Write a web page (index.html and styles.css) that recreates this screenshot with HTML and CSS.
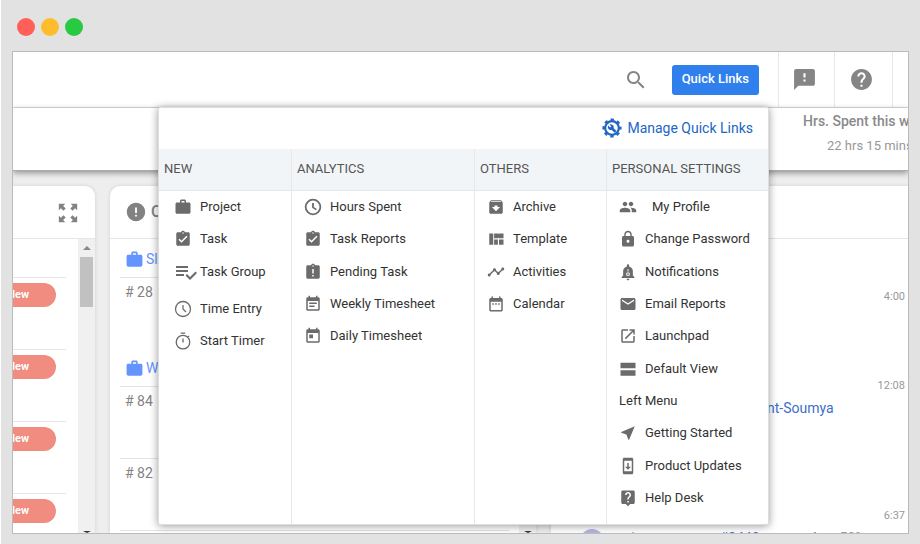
FILE: index.html
```html
<!DOCTYPE html>
<html lang="en">
<head>
<meta charset="utf-8">
<title>Quick Links</title>
<link rel="stylesheet" href="styles.css">
</head>
<body>
<svg class="sprite" aria-hidden="true">
  <symbol id="work" viewBox="0 0 24 24"><path d="M20 6h-4V4c0-1.110-.89-2-2-2h-4c-1.110 0-2 .89-2 2v2H4c-1.110 0-2 .89-2 2v11c0 1.110.89 2 2 2h16c1.110 0 2-.89 2-2V8c0-1.110-.89-2-2-2zm-6 0h-4V4h4v2z"/></symbol>
  <symbol id="task" viewBox="0 0 24 24"><path d="M19 3h-4.180C14.400 1.840 13.300 1 12 1c-1.300 0-2.400.84-2.820 2H5c-1.100 0-2 .9-2 2v14c0 1.100.9 2 2 2h14c1.100 0 2-.9 2-2V5c0-1.100-.9-2-2-2zm-7 0c.55 0 1 .45 1 1s-.45 1-1 1-1-.45-1-1 .45-1 1-1zm-2 14l-4-4 1.410-1.410L10 14.170l6.590-6.590L18 9l-8 8z"/></symbol>
  <symbol id="late" viewBox="0 0 24 24"><path d="M19 3h-4.180C14.400 1.840 13.300 1 12 1c-1.300 0-2.400.84-2.820 2H5c-1.100 0-2 .9-2 2v14c0 1.100.9 2 2 2h14c1.100 0 2-.9 2-2V5c0-1.100-.9-2-2-2zm-6 15h-2v-2h2v2zm0-4h-2V8h2v6zm-1-9c-.55 0-1-.45-1-1s.45-1 1-1 1 .45 1 1-.45 1-1 1z"/></symbol>
  <symbol id="group" viewBox="0 0 24 24"><path d="M14 10H2v2h12v-2zm0-4H2v2h12V6zM2 16h8v-2H2v2zm19.500-4.500L23 13l-6.990 7-4.510-4.500L13 14l3.010 3 5.490-5.500z"/></symbol>
  <symbol id="clock-thin" viewBox="0 0 24 24"><path fill="none" stroke="currentColor" stroke-width="1.700" d="M12 2a10 10 0 1 0 0 20 10 10 0 0 0 0-20zM12 6.500V12l4 4"/></symbol>
  <symbol id="timer" viewBox="0 0 24 24"><path fill="none" stroke="currentColor" stroke-width="1.800" d="M12 4.500a9 9 0 1 0 0 18 9 9 0 0 0 0-18zM9 1.500h6M12 8.500V14M18.200 7l1.800-1.800"/></symbol>
  <symbol id="clock" viewBox="0 0 24 24"><path fill="none" stroke="currentColor" stroke-width="2.400" d="M12 2.200a9.800 9.800 0 1 0 0 19.600 9.800 9.800 0 0 0 0-19.600zM12 6.500V12.500l4.500 3"/></symbol>
  <symbol id="week" viewBox="0 0 24 24"><path d="M17 10H7v2h10v-2zm2-7h-1V1h-2v2H8V1H6v2H5c-1.110 0-2 .9-2 2v14c0 1.100.89 2 2 2h14c1.100 0 2-.9 2-2V5c0-1.100-.9-2-2-2zm0 16H5V8h14v11zm-5-5H7v2h7v-2z"/></symbol>
  <symbol id="today" viewBox="0 0 24 24"><path d="M19 3h-1V1h-2v2H8V1H6v2H5c-1.110 0-2 .9-2 2v14c0 1.100.89 2 2 2h14c1.100 0 2-.9 2-2V5c0-1.100-.9-2-2-2zm0 16H5V8h14v11zM7 10h5v5H7z"/></symbol>
  <symbol id="calendar" viewBox="0 0 24 24"><path d="M9 11H7v2h2v-2zm4 0h-2v2h2v-2zm4 0h-2v2h2v-2zm2-7h-1V2h-2v2H8V2H6v2H5c-1.110 0-2 .9-2 2v14c0 1.100.89 2 2 2h14c1.100 0 2-.9 2-2V6c0-1.100-.9-2-2-2zm0 16H5V9h14v11z"/></symbol>
  <symbol id="archive" viewBox="0 0 24 24"><path d="M20.540 5.230l-1.390-1.680C18.880 3.210 18.470 3 18 3H6c-.47 0-.88.21-1.160.55L3.460 5.230C3.170 5.570 3 6.020 3 6.500V19c0 1.100.9 2 2 2h14c1.100 0 2-.9 2-2V6.500c0-.48-.17-.93-.46-1.270zM12 17.500L6.500 12H10v-2h4v2h3.500L12 17.500zM5.120 5l.81-1h12l.94 1H5.120z"/></symbol>
  <symbol id="template" viewBox="0 0 24 24"><path d="M3 4.500h5.300v15H3zM9.500 4.500h6v6.500h-6zM16 4.500h6V11h-6zM9.500 12.500h5v7h-5zM16 12.500h6v7h-6zM15 5.500h1.500V10H15z"/></symbol>
  <symbol id="activity" viewBox="0 0 24 24"><path d="M23 8c0 1.100-.9 2-2 2-.18 0-.35-.02-.51-.07l-3.560 3.550c.05.16.07.34.07.52 0 1.100-.9 2-2 2s-2-.9-2-2c0-.18.02-.36.07-.52l-2.550-2.550c-.16.05-.34.07-.52.07s-.36-.02-.52-.07l-4.550 4.560c.05.16.07.33.07.51 0 1.100-.9 2-2 2s-2-.9-2-2 .9-2 2-2c.18 0 .35.02.51.07l4.560-4.550C8.020 9.360 8 9.180 8 9c0-1.100.9-2 2-2s2 .9 2 2c0 .18-.02.36-.07.52l2.550 2.550c.16-.05.34-.07.52-.07s.36.02.52.07l3.550-3.560C19.020 8.350 19 8.180 19 8c0-1.100.9-2 2-2s2 .9 2 2z"/></symbol>
  <symbol id="people" viewBox="0 0 24 24"><path d="M16 11c1.660 0 3-1.340 3-3s-1.340-3-3-3-3 1.340-3 3 1.340 3 3 3zm-8 0c1.660 0 3-1.340 3-3S9.660 5 8 5 5 6.340 5 8s1.340 3 3 3zm0 2c-2.330 0-7 1.170-7 3.500V19h14v-2.500c0-2.330-4.670-3.500-7-3.500zm8 0c-.29 0-.62.02-.97.05C16.190 13.890 17 15.020 17 16.500V19h6v-2.500c0-2.330-4.670-3.500-7-3.500z"/></symbol>
  <symbol id="lock" viewBox="0 0 24 24"><path d="M18 8h-1V6c0-2.760-2.240-5-5-5S7 3.240 7 6v2H6c-1.100 0-2 .9-2 2v10c0 1.100.9 2 2 2h12c1.100 0 2-.9 2-2V10c0-1.100-.9-2-2-2zm-6 9c-1.100 0-2-.9-2-2s.9-2 2-2 2 .9 2 2-.9 2-2 2zm3.100-9H8.900V6c0-1.710 1.390-3.100 3.100-3.100s3.100 1.390 3.100 3.100v2z"/></symbol>
  <symbol id="bell" viewBox="0 0 24 24"><path d="M12 23c1.100 0 2-.9 2-2h-4c0 1.100.9 2 2 2zm6.500-6.500V11c0-3.100-2-5.600-5-6.300V3c0-.83-.67-1.500-1.500-1.500s-1.500.67-1.500 1.500v1.700c-3 .7-5 3.200-5 6.300v5.500l-2 2V20h17v-1.500z"/><path fill="none" stroke="#fff" stroke-width="1.200" d="M12 8v3.500M10.300 16.500v-3.200h3.400v3.200z"/></symbol>
  <symbol id="mail" viewBox="0 0 24 24"><path d="M20 4H4c-1.100 0-2 .9-2 2v12c0 1.100.9 2 2 2h16c1.100 0 2-.9 2-2V6c0-1.100-.9-2-2-2zm0 4l-8 5-8-5V6l8 5 8-5v2z"/></symbol>
  <symbol id="launch" viewBox="0 0 24 24"><path d="M19 19H5V5h7V3H5c-1.110 0-2 .9-2 2v14c0 1.100.89 2 2 2h14c1.100 0 2-.9 2-2v-7h-2v7zM14 3v2h3.590l-9.830 9.830 1.410 1.410L19 6.410V10h2V3h-7z"/></symbol>
  <symbol id="stream" viewBox="0 0 24 24"><path d="M2 13.500h20V21H2zM2 3.500h20V11H2z"/></symbol>
  <symbol id="near" viewBox="0 0 24 24"><path d="M21 3L3 10.530v.98l6.840 2.650L12.480 21h.98L21 3z"/></symbol>
  <symbol id="update" viewBox="0 0 24 24"><path d="M17 1H7c-1.100 0-2 .9-2 2v18c0 1.100.9 2 2 2h10c1.100 0 2-.9 2-2V3c0-1.100-.9-2-2-2zm0 18H7V5h10v14zm-1-6h-3V8h-2v5H8l4 4 4-4z"/></symbol>
  <symbol id="desk" viewBox="0 0 24 24"><path d="M19 2H5c-1.110 0-2 .9-2 2v14c0 1.100.89 2 2 2h4l3 3 3-3h4c1.100 0 2-.9 2-2V4c0-1.100-.9-2-2-2zm-6 16h-2v-2h2v2zm2.070-7.750l-.9.920C13.450 11.900 13 12.500 13 14h-2v-.5c0-1.100.45-2.100 1.170-2.830l1.240-1.260c.37-.36.59-.86.59-1.410 0-1.100-.9-2-2-2s-2 .9-2 2H8c0-2.210 1.790-4 4-4s4 1.790 4 4c0 .88-.36 1.680-.93 2.250z"/></symbol>
  <symbol id="search" viewBox="0 0 24 24"><path d="M15.500 14h-.79l-.28-.27C15.410 12.590 16 11.110 16 9.500 16 5.910 13.090 3 9.500 3S3 5.910 3 9.500 5.910 16 9.500 16c1.610 0 3.090-.59 4.230-1.570l.27.28v.79l5 4.990L20.490 19l-4.990-5zm-6 0C7.010 14 5 11.990 5 9.500S7.010 5 9.500 5 14 7.010 14 9.500 11.990 14 9.500 14z"/></symbol>
  <symbol id="feedback" viewBox="0 0 24 24"><path d="M20 2H4c-1.100 0-2 .9-2 2v18l4-4h14c1.100 0 2-.9 2-2V4c0-1.100-.9-2-2-2zm-7 12h-2v-2h2v2zm0-4h-2V6h2v4z"/></symbol>
  <symbol id="help" viewBox="0 0 24 24"><path d="M12 2C6.480 2 2 6.480 2 12s4.480 10 10 10 10-4.480 10-10S17.520 2 12 2zm1 17h-2v-2h2v2zm2.070-7.750l-.9.920C13.450 12.900 13 13.500 13 15h-2v-.5c0-1.100.45-2.100 1.170-2.830l1.240-1.260c.37-.36.59-.86.59-1.410 0-1.100-.9-2-2-2s-2 .9-2 2H8c0-2.210 1.790-4 4-4s4 1.790 4 4c0 .88-.36 1.680-.93 2.250z"/></symbol>
  <symbol id="error" viewBox="0 0 24 24"><path d="M12 2C6.480 2 2 6.480 2 12s4.480 10 10 10 10-4.480 10-10S17.520 2 12 2zm1 15h-2v-2h2v2zm0-4h-2V7h2v6z"/></symbol>
  <symbol id="expand" viewBox="0 0 24 24"><path d="M2 2h7L6.700 4.300 9.500 7 7 9.500 4.300 6.700 2 9zM22 2v7l-2.300-2.300L17 9.500 14.500 7l2.800-2.700L15 2zM2 22v-7l2.300 2.300L7 14.500 9.500 17l-2.800 2.700L9 22zM22 22h-7l2.300-2.300-2.800-2.700 2.500-2.500 2.700 2.800L22 15z"/></symbol>
  <symbol id="gear" viewBox="0 0 24 24"><circle cx="12" cy="12" r="8.200" fill="none" stroke="currentColor" stroke-width="2.600"/><circle cx="12" cy="12" r="10" fill="none" stroke="currentColor" stroke-width="3" stroke-dasharray="3.927 3.927" stroke-dashoffset="1.960"/><path d="M8.800 7.600l2.300 2.300-1.400 1.400-2.200-2.300c-1 1.800-.4 3.800 1 4.800 1 .7 2.200.8 3.200.5l3.500 3.400 2.200-2.200-3.500-3.500c.4-1.200.2-2.400-.7-3.300-1.200-1.200-2.900-1.500-4.400-1.100z"/></symbol>
</svg>

<div class="dots"><span class="dot dot-red"></span><span class="dot dot-yellow"></span><span class="dot dot-green"></span></div>

<div class="window">
  <header class="toolbar">
    <button class="tool tool-search" aria-label="Search"><svg><use href="#search"/></svg></button>
    <button class="quick">Quick Links</button>
    <button class="tool tool-cell tool-feedback" aria-label="Feedback"><svg><use href="#feedback"/></svg></button>
    <button class="tool tool-cell tool-help" aria-label="Help"><svg><use href="#help"/></svg></button>
    <span class="tool-cell tool-end"></span>
  </header>

  <section class="summary">
    <div class="hours">
      <h2>Hrs. Spent this week</h2>
      <p>22 hrs 15 mins</p>
    </div>
  </section>

  <main class="board">
    <section class="card card-status">
      <div class="card-head"><button class="expand" aria-label="Expand"><svg><use href="#expand"/></svg></button></div>
      <div class="scroller">
        <ul class="statuses">
          <li></li>
          <li><span class="pill">New</span></li>
          <li><span class="pill">New</span></li>
          <li><span class="pill">New</span></li>
          <li><span class="pill">New</span></li>
        </ul>
        <div class="track"><span class="arrow-up"></span><span class="thumb"></span><span class="arrow-down"></span></div>
      </div>
    </section>

    <section class="card card-overdue">
      <div class="card-head"><svg><use href="#error"/></svg><h2>O</h2></div>
      <div class="scroller">
        <div class="projects">
          <h3><svg><use href="#work"/></svg>Sl</h3>
          <p># 28</p>
          <h3><svg><use href="#work"/></svg>W</h3>
          <p># 84</p>
          <p># 82</p>
        </div>
        <div class="track"><span class="arrow-down"></span></div>
      </div>
    </section>

    <section class="card card-activity">
      <div class="card-head"></div>
      <ul class="feed">
        <li><time>4:00</time></li>
        <li><time>12:08</time><p class="mention"><a href="#">nt-Soumya</a></p></li>
        <li><time>6:37</time><p><span class="avatar"></span>task progress on <a href="#">#2443: test task</a> to 50%</p></li>
      </ul>
    </section>
  </main>

  <nav class="menu" aria-label="Quick links">
    <a class="manage" href="#"><svg><use href="#gear"/></svg>Manage Quick Links</a>
    <div class="columns">
      <section>
        <h3>NEW</h3>
        <ul class="links links-new">
          <li><a href="#"><svg><use href="#work"/></svg>Project</a></li>
          <li><a href="#"><svg><use href="#task"/></svg>Task</a></li>
          <li class="tall"><a href="#"><svg class="wide"><use href="#group"/></svg>Task Group</a></li>
          <li><a href="#"><svg><use href="#clock-thin"/></svg>Time Entry</a></li>
          <li><a href="#"><svg><use href="#timer"/></svg>Start Timer</a></li>
        </ul>
      </section>
      <section>
        <h3>ANALYTICS</h3>
        <ul class="links">
          <li><a href="#"><svg><use href="#clock"/></svg>Hours Spent</a></li>
          <li><a href="#"><svg><use href="#task"/></svg>Task Reports</a></li>
          <li><a href="#"><svg><use href="#late"/></svg>Pending Task</a></li>
          <li><a href="#"><svg><use href="#week"/></svg>Weekly Timesheet</a></li>
          <li><a href="#"><svg><use href="#today"/></svg>Daily Timesheet</a></li>
        </ul>
      </section>
      <section>
        <h3>OTHERS</h3>
        <ul class="links">
          <li><a href="#"><svg><use href="#archive"/></svg>Archive</a></li>
          <li><a href="#"><svg><use href="#template"/></svg>Template</a></li>
          <li><a href="#"><svg><use href="#activity"/></svg>Activities</a></li>
          <li><a href="#"><svg><use href="#calendar"/></svg>Calendar</a></li>
        </ul>
      </section>
      <section>
        <h3>PERSONAL SETTINGS</h3>
        <ul class="links">
          <li class="profile"><a href="#"><svg><use href="#people"/></svg>My Profile</a></li>
          <li><a href="#"><svg><use href="#lock"/></svg>Change Password</a></li>
          <li><a href="#"><svg><use href="#bell"/></svg>Notifications</a></li>
          <li><a href="#"><svg><use href="#mail"/></svg>Email Reports</a></li>
          <li><a href="#"><svg><use href="#launch"/></svg>Launchpad</a></li>
          <li><a href="#"><svg><use href="#stream"/></svg>Default View</a></li>
          <li><a href="#">Left Menu</a></li>
          <li><a href="#"><svg><use href="#near"/></svg>Getting Started</a></li>
          <li><a href="#"><svg><use href="#update"/></svg>Product Updates</a></li>
          <li><a href="#"><svg><use href="#desk"/></svg>Help Desk</a></li>
        </ul>
      </section>
    </div>
  </nav>
</div>
</body>
</html>
```

FILE: styles.css
```css
* { box-sizing: border-box; margin: 0; padding: 0; }

body {
  display: flex;
  flex-direction: column;
  height: 100vh;
  padding: 18px 11px 10px;
  border-left: 1px solid #fff;
  background: #e2e2e2;
  color: #333;
  font: 14px/20px Roboto, "Liberation Sans", sans-serif;
  overflow: hidden;
}

ul { list-style: none; }
a { color: inherit; text-decoration: none; }
button { border: 0; background: none; font: inherit; color: inherit; }
svg { display: block; width: 18px; height: 18px; flex: none; fill: currentColor; }
.sprite { position: absolute; width: 0; height: 0; }

.dots { display: flex; gap: 6px; padding: 0 5px; margin-bottom: 15px; }
.dot { width: 18px; height: 18px; border-radius: 50%; }
.dot-red { background: #ff5f57; }
.dot-yellow { background: #ffbd2e; }
.dot-green { background: #28ca41; }

.window {
  position: relative;
  display: flex;
  flex-direction: column;
  flex: 1;
  min-height: 0;
  border: 1px solid #bbb;
  background: #eee;
  overflow: hidden;
}

/* Top toolbar */
.toolbar {
  display: flex;
  align-items: stretch;
  justify-content: flex-end;
  height: 56px;
  flex: none;
  border-bottom: 1px solid #ddd;
  background: #fff;
  color: #858585;
}
.tool { display: flex; align-items: center; justify-content: center; }
.tool svg { width: 24px; height: 24px; }
.tool-search { margin-right: 24px; }
.tool-cell { border-left: 1px solid #e8e8e8; }
.tool-feedback { width: 56px; padding-right: 5px; }
.tool-help { width: 58px; padding-right: 5px; }
.tool-feedback svg, .tool-help svg { width: 25px; height: 25px; }
.tool-end { width: 16px; }
.quick {
  align-self: center;
  height: 30px;
  padding: 0 10px 1px;
  margin-right: 19px;
  border-radius: 3px;
  background: #2f80ed;
  color: #fff;
  font-size: 13px;
  font-weight: 500;
}

/* Hours summary */
.summary {
  position: relative;
  display: flex;
  justify-content: flex-end;
  height: 63px;
  flex: none;
  background: #fff;
  color: #8a8a8a;
  border-bottom: 1px solid #aaa;
  box-shadow: 0 2px 6px rgba(0, 0, 0, .4);
}
.hours { width: 105px; white-space: nowrap; padding-top: 3px; }
.hours h2 { font-size: 14px; font-weight: 500; }
.hours p { padding: 5px 0 0 24px; font-size: 13px; color: #999; }

/* Dashboard cards */
.board {
  display: grid;
  grid-template-columns: 82px 426px 1fr;
  gap: 15px;
  flex: 1;
  min-height: 0;
  padding-top: 15px;
}
.card {
  display: flex;
  flex-direction: column;
  min-width: 0;
  background: #fff;
  border-radius: 10px 10px 0 0;
  box-shadow: 0 0 4px rgba(0, 0, 0, .12);
  overflow: hidden;
}
.card-status { border-top-left-radius: 0; }
.card-head {
  display: flex;
  align-items: center;
  gap: 4px;
  height: 53px;
  flex: none;
  padding: 0 15px;
  border-bottom: 1px solid #e6e6e6;
  color: #828282;
}
.card-head svg { width: 22px; height: 22px; }
.card-head h2 { font-size: 16px; font-weight: 500; }
.expand { margin-left: auto; }
.card-status .card-head { padding: 1px 16px 0; }

.scroller { display: flex; flex: 1; min-height: 0; overflow: hidden; }
.track {
  display: flex;
  flex-direction: column;
  width: 17px;
  flex: none;
  padding: 7px 2px 0;
  background: #f0f0f0;
}
.arrow-up, .arrow-down {
  align-self: center;
  width: 7px;
  border: solid transparent;
  border-width: 0 4px;
}
.arrow-up { border-bottom: 4px solid #888; }
.arrow-down { margin-top: auto; border-top: 2px solid #333; }
.thumb { height: 50px; margin-top: 7px; background: #c1c1c1; }

.statuses { flex: 1; padding-right: 12px; }
.statuses li { height: 72px; padding-top: 5px; border-bottom: 1px solid #e6e6e6; }
.statuses li:first-child { height: 39px; }
.pill {
  display: flex;
  align-items: center;
  justify-content: flex-end;
  width: 43px;
  height: 24px;
  padding-right: 27px;
  border-radius: 0 12px 12px 0;
  background: #f08c80;
  color: #fff;
  font-size: 11px;
  font-weight: 700;
}

.projects { flex: 1; padding: 2px 10px 0; }
.projects h3 {
  display: flex;
  align-items: center;
  gap: 2px;
  height: 37px;
  padding-left: 5px;
  border-bottom: 1px solid #e3e3e3;
  color: #6495ff;
  font-size: 14px;
  font-weight: 400;
}
.projects h3 svg { width: 19px; height: 19px; }
.projects p { height: 72px; padding: 4px 5px; color: #828282; }
.projects p:has(+ p) { border-bottom: 1px solid #e3e3e3; }
.projects p:last-child { border-bottom: 1px solid #e3e3e3; }

.card-activity { border-radius: 0; }
.feed { padding-top: 48px; }
.feed li { min-height: 89px; padding-right: 3px; white-space: nowrap; }
.feed li + li { height: 130px; }
.feed time { display: block; text-align: right; color: #999; font-size: 11px; }
.feed p { position: relative; padding: 2px 0 0 61px; color: #999; }
.feed .mention { padding-left: 216px; }
.feed a { color: #3d6fc9; }
.avatar {
  position: absolute;
  top: 3px;
  left: 29px;
  width: 24px;
  height: 24px;
  border-radius: 50%;
  background: #b3b5e6;
}

/* Quick links drop-down */
.menu {
  position: absolute;
  top: 55px;
  left: 145px;
  right: 139px;
  display: flex;
  flex-direction: column;
  background: #fff;
  border: 1px solid #ddd;
  border-radius: 2px;
  box-shadow: 0 1px 8px rgba(0, 0, 0, .4);
}
.manage {
  display: flex;
  align-items: center;
  justify-content: flex-end;
  gap: 5px;
  height: 41px;
  padding: 0 15px 1px;
  color: #2166c4;
}
.manage svg { width: 20px; height: 20px; }
.columns { display: grid; grid-template-columns: 132fr 183fr 132fr 162fr; }
.columns section + section { border-left: 1px solid #e8e8e8; }
.columns h3 {
  height: 42px;
  padding: 0 5px;
  border-bottom: 1px solid #e6e6e6;
  background: #f2f5f8;
  color: #555;
  font-size: 13px;
  font-weight: 400;
  line-height: 40px;
}
.links {
  display: grid;
  grid-template-rows: repeat(10, 1fr);
  height: 333px;
  padding: 0 0 10px 12px;
  font-size: 13px;
}
.links li { display: flex; align-items: center; }
.links a { display: flex; align-items: center; gap: 8px; }
.links svg { color: #6b6b6b; }
.links-new { display: block; padding-left: 15px; }
.links-new li { height: 32px; }
.links-new .tall { height: 38px; padding-bottom: 4px; }
.links .wide { width: 24px; height: 24px; margin-right: -6px; }
.profile a { gap: 15px; }
```
